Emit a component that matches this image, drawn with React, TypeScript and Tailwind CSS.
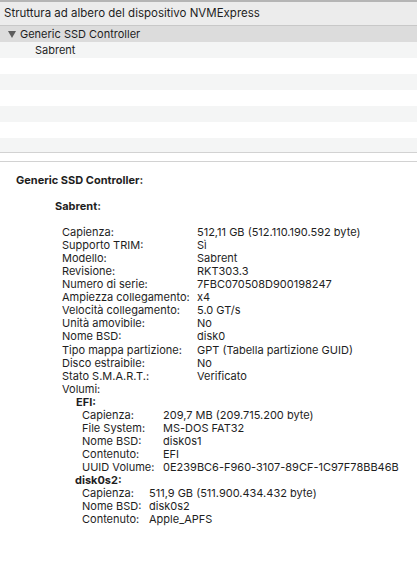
import type { ReactNode } from 'react';

type Pair = [string, string];

const driveInfo: Pair[] = [
  ['Capienza:', '512,11 GB (512.110.190.592 byte)'],
  ['Supporto TRIM:', 'Sì'],
  ['Modello:', 'Sabrent'],
  ['Revisione:', 'RKT303.3'],
  ['Numero di serie:', '7FBC070508D900198247'],
  ['Ampiezza collegamento:', 'x4'],
  ['Velocità collegamento:', '5.0 GT/s'],
  ['Unità amovibile:', 'No'],
  ['Nome BSD:', 'disk0'],
  ['Tipo mappa partizione:', 'GPT (Tabella partizione GUID)'],
  ['Disco estraibile:', 'No'],
  ['Stato S.M.A.R.T.:', 'Verificato'],
];

const efiInfo: Pair[] = [
  ['Capienza:', '209,7 MB (209.715.200 byte)'],
  ['File System:', 'MS-DOS FAT32'],
  ['Nome BSD:', 'disk0s1'],
  ['Contenuto:', 'EFI'],
  ['UUID Volume:', '0E239BC6-F960-3107-89CF-1C97F78BB46B'],
];

const apfsInfo: Pair[] = [
  ['Capienza:', '511,9 GB (511.900.434.432 byte)'],
  ['Nome BSD:', 'disk0s2'],
  ['Contenuto:', 'Apple_APFS'],
];

const InfoRows = ({ rows, labelCol }: { rows: Pair[]; labelCol: string }) => (
  <div className={`grid ${labelCol}`}>
    {rows.map(([label, value]) => (
      <div key={label + value} className="contents">
        <span className="whitespace-nowrap">{label}</span>
        <span className="whitespace-nowrap">{value}</span>
      </div>
    ))}
  </div>
);

const TreeRow = ({ className, children }: { className: string; children?: ReactNode }) => (
  <div className={`h-4 flex items-center text-[11px] leading-4 ${className}`}>{children}</div>
);

export default function App() {
  return (
    <div className="w-[417px] h-[569px] overflow-hidden bg-white text-[#1e1e1e] font-['Inter',sans-serif]">
      {/* device tree */}
      <div className="border-t-2 border-[#b5b5b5]">
        <div className="h-[24px] bg-[#ececec] border-b border-[#c8c8c8] flex items-center pl-1 text-[11.5px]">
          Struttura ad albero del dispositivo NVMExpress
        </div>
        <TreeRow className="bg-[#dcdcdc]">
          <svg width="8" height="8" viewBox="0 0 8 8" className="ml-[8px] mr-[4px]">
            <path d="M0 1 L8 1 L4 8 Z" fill="#5c5c5c" />
          </svg>
          Generic SSD Controller
        </TreeRow>
        <TreeRow className="bg-[#f4f5f5] pl-[35px]">Sabrent</TreeRow>
        <TreeRow className="bg-white" />
        <TreeRow className="bg-[#f4f5f5]" />
        <TreeRow className="bg-white" />
        <TreeRow className="bg-[#f4f5f5]" />
        <TreeRow className="bg-white" />
        <div className="h-[14px] bg-[#f4f5f5]" />
      </div>

      {/* split divider */}
      <div className="h-[10px] border-y border-[#d2d2d2] bg-white" />

      {/* details */}
      <div className="pt-[12px] text-[11px] leading-[13.05px]">
        <div className="pl-4 font-bold">Generic SSD Controller:</div>
        <div className="h-[13px]" />
        <div className="pl-[55px] font-bold">Sabrent:</div>
        <div className="h-[13px]" />
        <div className="pl-[62px]">
          <InfoRows rows={driveInfo} labelCol="grid-cols-[135px_auto]" />
          <div>Volumi:</div>
          <div className="pl-[14px] font-bold">EFI:</div>
          <div className="pl-5">
            <InfoRows rows={efiInfo} labelCol="grid-cols-[81px_auto]" />
          </div>
          <div className="pl-[13px] font-bold">disk0s2:</div>
          <div className="pl-5">
            <InfoRows rows={apfsInfo} labelCol="grid-cols-[67px_auto]" />
          </div>
        </div>
      </div>
    </div>
  );
}
